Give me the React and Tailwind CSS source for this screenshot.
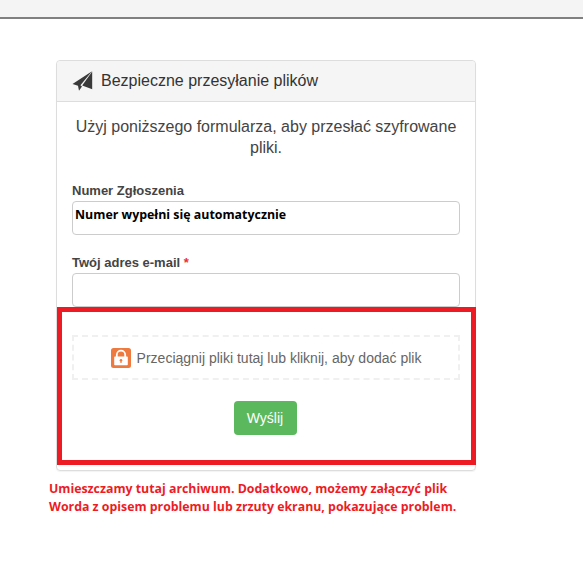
function PlaneIcon() {
  return (
    <svg width="21" height="20" viewBox="0 0 21 20" className="shrink-0">
      <path d="M20 0.3 L0.5 13 L6 14.8 L7 19.7 L10 15.6 L8.4 14.2 Z" fill="#3a3a3a" />
      <path d="M20.2 0.5 L10.2 14.6 L20.2 18.2 Z" fill="#3a3a3a" />
    </svg>
  );
}

function LockIcon() {
  return (
    <svg width="20" height="20" viewBox="0 0 20 20" className="shrink-0">
      <rect x="0" y="0" width="20" height="20" rx="2.5" fill="#ee7a3f" />
      <path d="M5.8 9 V6.8 a4.2 4.2 0 0 1 8.4 0 V9" fill="none" stroke="#fff" strokeWidth="1.8" />
      <rect x="3.2" y="8.6" width="13.6" height="8.6" rx="0.8" fill="#fff" />
      <circle cx="10" cy="12.2" r="1.3" fill="#ee7a3f" />
      <rect x="9.4" y="12.4" width="1.2" height="2.6" fill="#ee7a3f" />
    </svg>
  );
}

export default function App() {
  return (
    <div className="relative h-[561px] w-[583px] overflow-hidden bg-white font-['Liberation_Sans',sans-serif] text-[#333]">
      <div className="h-[19px] border-b-2 border-[#808080] bg-[#f4f4f4]" />

      <div className="relative ml-14 mt-[41px] w-[420px]">
        <div className="h-[411px] rounded border border-[#ddd] shadow-[0_1px_1px_rgba(0,0,0,0.05)]">
          <div className="flex h-[41px] items-center gap-2 rounded-t border-b border-[#ddd] bg-[#f5f5f5] px-[15px]">
            <PlaneIcon />
            <h3 className="text-base text-[#333]">Bezpieczne przesyłanie plików</h3>
          </div>

          <div className="px-[15px] pt-[14px]">
            <p className="text-center text-base leading-[21px] text-[#444]">
              Użyj poniższego formularza, aby przesłać szyfrowane pliki.
            </p>

            <label className="mt-[24px] block text-[13px] leading-[17px] font-bold text-[#444]">Numer Zgłoszenia</label>
            <div className="mt-[2px] h-[34px] rounded border border-[#ccc] px-[2px] pt-[4px] font-['Open_Sans',sans-serif] text-[12.4px] leading-[18px] font-bold text-black">
              Numer wypełni się automatycznie
            </div>

            <label className="mt-[19px] block text-[13px] leading-[17px] font-bold text-[#444]">
              Twój adres e-mail <span className="text-[#e9322d]">*</span>
            </label>
            <div className="mt-[2px] h-[34px] rounded border border-[#ccc]" />

            <div className="mt-[28px] flex h-[45px] items-center justify-center gap-[6px] border-2 border-dashed border-[#f0f0f0] text-sm text-[#666]">
              <LockIcon />
              <span>Przeciągnij pliki tutaj lub kliknij, aby dodać plik</span>
            </div>

            <div className="mt-[21px] flex justify-center pr-[2px]">
              <button className="h-[34px] w-[63px] rounded bg-[#5cb85c] text-sm text-white">Wyślij</button>
            </div>
          </div>
        </div>

        {/* red frame drawn on top of the panel */}
        <div className="absolute top-[247px] left-[1px] h-[158px] w-[419px] border-[5px] border-[#ed1c24]" />
      </div>

      <p className="mt-[9px] ml-[49px] font-['Open_Sans',sans-serif] text-[12.33px] leading-[18px] font-bold text-[#ed1c24]">
        Umieszczamy tutaj archiwum. Dodatkowo, możemy załączyć plik
        <br />
        Worda z opisem problemu lub zrzuty ekranu, pokazujące problem.
      </p>
    </div>
  );
}
